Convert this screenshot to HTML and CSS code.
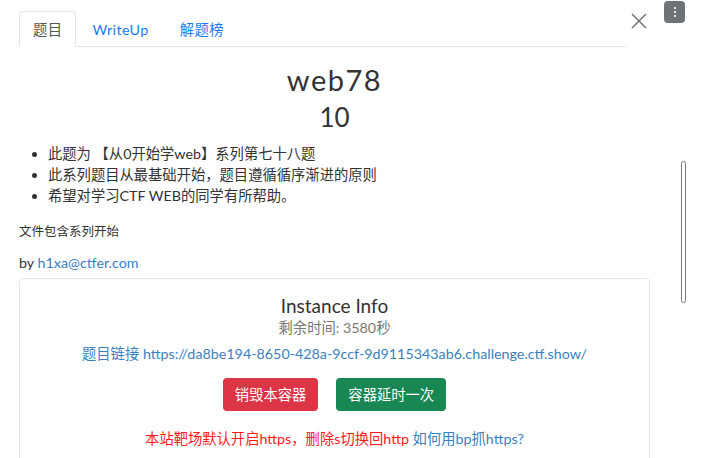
FILE: index.html
```html
<!DOCTYPE html>
<html lang="zh-CN">
<head>
    <meta charset="UTF-8">
    <title>web78</title>
    <link rel="stylesheet" href="styles.css">
</head>
<body>
    <div class="modal">
        <div class="modal-header">
            <div class="nav-tabs">
                <a class="tab active">题目</a>
                <a class="tab">WriteUp</a>
                <a class="tab">解题榜</a>
            </div>
            <span class="close">
                <svg width="16" height="16" viewBox="0 0 16 16"><path d="M1 1 L15 15 M15 1 L1 15" stroke="#7a7a7a" stroke-width="1.6" fill="none"/></svg>
            </span>
        </div>

        <h3 class="challenge-name">web78</h3>
        <h4 class="challenge-value">10</h4>

        <ul class="desc">
            <li>此题为 【从0开始学web】系列第七十八题</li>
            <li>此系列题目从最基础开始，题目遵循循序渐进的原则</li>
            <li>希望对学习CTF WEB的同学有所帮助。</li>
        </ul>
        <p class="note">文件包含系列开始</p>
        <p class="author">by <a class="link">h1xa@ctfer.com</a></p>

        <div class="card">
            <h4 class="card-title">Instance Info</h4>
            <div class="time-left">剩余时间: 3580秒</div>
            <div class="url"><a class="link">题目链接 https://da8be194-8650-428a-9ccf-9d9115343ab6.challenge.ctf.show/</a></div>
            <div class="actions">
                <button class="btn btn-danger">销毁本容器</button>
                <button class="btn btn-success">容器延时一次</button>
            </div>
            <p class="https-tip">本站靶场默认开启https，删除s切换回http <a class="link">如何用bp抓https?</a></p>
        </div>
    </div>

    <div class="menu-btn"><span></span><span></span><span></span></div>
    <div class="scrollbar"></div>
</body>
</html>
```

FILE: styles.css
```css
body {
    margin: 0;
    font-family: Lato, "Noto Sans CJK SC", sans-serif;
    font-size: 14.3px;
    line-height: 21px;
    color: #333;
    background-color: white;
}
.modal {
    width: 631px;
    padding: 11px 0 0 19px;
}
.modal-header {
    display: flex;
    align-items: flex-start;
}
.nav-tabs {
    flex: 1;
    display: flex;
    border-bottom: 1px solid #e4e6e8;
    height: 35px;
}
.tab {
    display: block;
    padding: 7px 14px 6px;
    border: 1px solid transparent;
    border-radius: 4px 4px 0 0;
    color: #1a7cf5;
    cursor: pointer;
    margin-bottom: -1px;
    height: 21px;
    letter-spacing: 0.4px;
}
.tab.active {
    color: #555;
    padding: 7px 13px 6px;
    border-color: #e4e6e8 #e4e6e8 white;
    background-color: white;
}
.tab + .tab {
    margin-left: 1px;
}
.close {
    width: 16px;
    height: 16px;
    margin: 2px 3px 0 4px;
}
.challenge-name {
    margin: 15px 0 0;
    text-align: center;
    font-size: 29px;
    font-weight: normal;
    line-height: 36px;
    letter-spacing: 1.5px;
    color: #333;
}
.challenge-value {
    margin: 4px 0 0;
    text-align: center;
    font-size: 26px;
    font-weight: normal;
    line-height: 31px;
    color: #333;
}
.desc {
    margin: 10px 0 0;
    padding-left: 29px;
}
.note {
    margin: 15px 0 0;
    font-size: 12.5px;
}
.author {
    margin: 10px 0 0;
}
.link {
    color: #3a7fc0;
    text-decoration: none;
}
.card {
    margin-top: 5px;
    border: 1px solid #e6e6e6;
    border-radius: 4px;
    padding: 15px 10px 0;
    text-align: center;
    height: 200px;
}
.card-title {
    margin: 0;
    font-size: 19px;
    font-weight: normal;
    line-height: 23px;
    color: #333;
}
.time-left {
    color: #777;
}
.url {
    margin-top: 5px;
}
.actions {
    margin-top: 14px;
    display: flex;
    justify-content: center;
    gap: 18px;
}
.btn {
    font-family: Lato, "Noto Sans CJK SC", sans-serif;
    font-size: 14.3px;
    line-height: 21px;
    padding: 6px 12px;
    border: none;
    border-radius: 4px;
    color: white;
}
.btn-danger {
    background-color: #dc3545;
}
.btn-success {
    background-color: #198754;
}
.https-tip {
    margin: 17px 0 0;
    color: #ff1a1a;
}
.menu-btn {
    position: absolute;
    left: 664px;
    top: 1px;
    width: 21px;
    height: 22px;
    border-radius: 4px;
    background-color: #6e7378;
    display: flex;
    flex-direction: column;
    align-items: center;
    justify-content: center;
    gap: 2px;
}
.menu-btn span {
    width: 2px;
    height: 2px;
    background-color: #e6e6e6;
}
.scrollbar {
    position: absolute;
    left: 681px;
    top: 161px;
    width: 3px;
    height: 140px;
    border: 1px solid #7a7a7a;
    border-radius: 3px;
    background-color: white;
}
```
